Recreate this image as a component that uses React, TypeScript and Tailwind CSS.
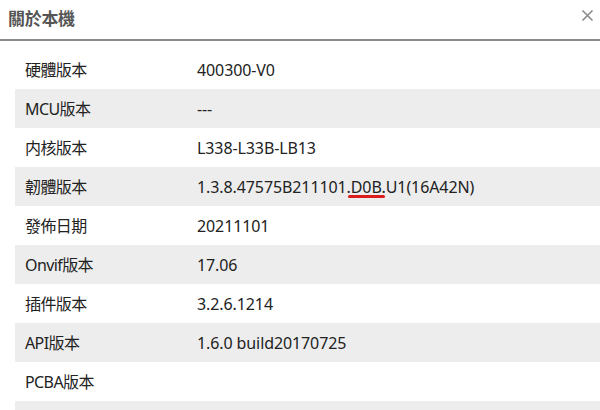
import React from "react";

const rows: { label: string; value: React.ReactNode }[] = [
  { label: "硬體版本", value: "400300-V0" },
  { label: "MCU版本", value: "---" },
  { label: "内核版本", value: "L338-L33B-LB13" },
  {
    label: "韌體版本",
    value: (
      <>
        1.3.8.47575B211101
        <span className="relative">
          .D0B.
          <span className="absolute left-[1px] right-[1px] bottom-[0px] h-[3px] rounded-full bg-[#dd1c1c]" />
        </span>
        U1(16A42N)
      </>
    ),
  },
  { label: "發佈日期", value: "20211101" },
  { label: "Onvif版本", value: "17.06" },
  { label: "插件版本", value: "3.2.6.1214" },
  { label: "API版本", value: "1.6.0 build20170725" },
  { label: "PCBA版本", value: "" },
  { label: "", value: "" },
];

export default function App() {
  return (
    <div
      className="w-[600px] h-[410px] overflow-hidden bg-white text-[#222]"
      style={{ fontFamily: '"Noto Sans", "Noto Sans CJK TC", sans-serif' }}
    >
      <div className="h-[37px] flex items-center justify-between pl-[8px] pr-[6px]">
        <span className="text-[17px] font-bold text-[#555] tracking-[-0.3px]">關於本機</span>
        <svg width="13" height="13" viewBox="0 0 13 13" className="mt-[-6px]">
          <path d="M1.5 1.5 L11.5 11.5 M11.5 1.5 L1.5 11.5" stroke="#8a8a8a" strokeWidth="1.6" />
        </svg>
      </div>
      <div className="h-[2px] overflow-hidden">
        <div className="mt-[-17px] pl-[28px] text-[16px] leading-[18px] text-[#777] tracking-[1px]">設備型號</div>
      </div>
      <div className="h-[2px] bg-[#8a8a8a]" />
      <div className="pt-[9px] pl-[15px]">
        {rows.map((r, i) => (
          <div
            key={i}
            className={`h-[39px] flex items-center text-[16px] ${i % 2 === 1 ? "bg-[#ededed]" : "bg-white"}`}
          >
            <div className="w-[182px] pl-[10px] tracking-[-0.6px]">{r.label}</div>
            <div className="tracking-[-0.1px]">{r.value}</div>
          </div>
        ))}
      </div>
    </div>
  );
}
